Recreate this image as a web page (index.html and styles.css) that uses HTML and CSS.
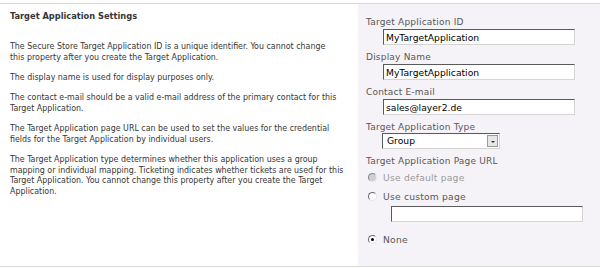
FILE: index.html
```html
<!DOCTYPE html>
<html lang="en">
<head>
  <meta charset="UTF-8" />
  <title>Target Application Settings</title>
  <link rel="stylesheet" href="styles.css">
</head>
<body>
  <div class="section">
    <div class="description">
      <h3>Target Application Settings</h3>
      <p>The Secure Store Target Application ID is a unique identifier. You cannot change<br>this property after you create the Target Application.</p>
      <p>The display name is used for display purposes only.</p>
      <p>The contact e-mail should be a valid e-mail address of the primary contact for this<br>Target Application.</p>
      <p>The Target Application page URL can be used to set the values for the credential<br>fields for the Target Application by individual users.</p>
      <p>The Target Application type determines whether this application uses a group<br>mapping or individual mapping. Ticketing indicates whether tickets are used for this<br>Target Application. You cannot change this property after you create the Target<br>Application.</p>
    </div>

    <div class="fields">
      <div class="field">
        <label>Target Application ID</label>
        <input class="text" type="text" value="MyTargetApplication">
      </div>
      <div class="field">
        <label>Display Name</label>
        <input class="text" type="text" value="MyTargetApplication">
      </div>
      <div class="field">
        <label>Contact E-mail</label>
        <input class="text" type="text" value="sales@layer2.de">
      </div>
      <div class="field">
        <label>Target Application Type</label>
        <div class="select">
          <span class="select-value">Group</span>
          <span class="select-button"><span class="arrow"></span></span>
        </div>
      </div>
      <div class="field">
        <label>Target Application Page URL</label>
        <div class="option disabled"><span class="radio"></span>Use default page</div>
        <div class="option"><span class="radio"></span>Use custom page</div>
        <input class="text url" type="text" value="">
        <div class="option last"><span class="radio checked"></span>None</div>
      </div>
    </div>
  </div>
</body>
</html>
```

FILE: styles.css
```css
:root {
  --panel: #f6f3f8;
  --rule: #d9d9d9;
  --text: #363636;
  --label: #575757;
  --font-desc: 'DejaVu Sans Condensed', 'DejaVu Sans', sans-serif;
  --font-form: 'DejaVu Sans', Verdana, sans-serif;
}

html, body {
  margin: 0;
  padding: 0;
  background: #fff;
}

.section {
  display: flex;
  margin-top: 3px;
  height: 262px;
  border-top: 1px solid var(--rule);
  border-bottom: 1px solid var(--rule);
}

.description {
  width: 348px;
  padding: 6px 0 0 10px;
  font-family: var(--font-desc);
  font-size: 8.8px;
  line-height: 10.7px;
  color: var(--text);
}

.description h3 {
  margin: 0 0 19px;
  font-size: 9.2px;
  font-weight: bold;
  line-height: 12px;
}

.description p {
  margin: 0 0 9.5px;
}

.fields {
  flex: 1;
  background: var(--panel);
  padding: 12px 0 0 8px;
  font-family: var(--font-form);
}

.field {
  margin-bottom: 6px;
}

.field label {
  display: block;
  font-size: 9px;
  line-height: 12px;
  margin-bottom: 1px;
  color: var(--label);
  letter-spacing: 0.2px;
}

.text {
  display: block;
  box-sizing: border-box;
  width: 192px;
  height: 16px;
  margin: 0 0 0 17px;
  padding: 0 2px;
  border: 1px solid #d4d4d4;
  border-top-color: #5a5a5a;
  border-left-color: #5a5a5a;
  background: #fff;
  font-family: var(--font-form);
  font-size: 9.2px;
  color: #000;
  outline: none;
}

.select {
  display: flex;
  box-sizing: border-box;
  width: 118px;
  height: 16px;
  margin: -1px 0 0 16px;
  border: 1px solid #d4d4d4;
  border-top-color: #5a5a5a;
  border-left-color: #5a5a5a;
  background: #fff;
}

.select-value {
  flex: 1;
  padding-left: 4px;
  font-size: 9.2px;
  line-height: 14px;
  color: #000;
}

.select-button {
  display: flex;
  align-items: center;
  justify-content: center;
  width: 11px;
  margin: 1px;
  background: #e6e6e6;
  border: 1px solid #9a9a9a;
  box-sizing: border-box;
}

.arrow {
  width: 0;
  height: 0;
  border-left: 2px solid transparent;
  border-right: 2px solid transparent;
  border-top: 2px solid #333;
  margin-top: 2px;
}

.option {
  display: flex;
  align-items: center;
  height: 19px;
  font-size: 9.2px;
  color: var(--label);
  letter-spacing: 0.2px;
}

.option.disabled {
  color: #9a9a9a;
}

.option.last {
  margin-top: 8px;
}

.radio {
  position: relative;
  box-sizing: border-box;
  width: 9px;
  height: 9px;
  margin: 0 6px 0 2px;
  border-radius: 50%;
  border: 1px solid #e8e8e8;
  border-top-color: #6a6a6a;
  border-left-color: #6a6a6a;
  background: #fff;
}

.option.disabled .radio {
  background: #cfcfcf;
  border-top-color: #8a8a8a;
  border-left-color: #8a8a8a;
}

.radio.checked::after {
  content: '';
  position: absolute;
  top: 2px;
  left: 2px;
  width: 3px;
  height: 3px;
  border-radius: 50%;
  background: #000;
}

.url {
  width: 192px;
  margin: 0 0 0 25px;
}
```
